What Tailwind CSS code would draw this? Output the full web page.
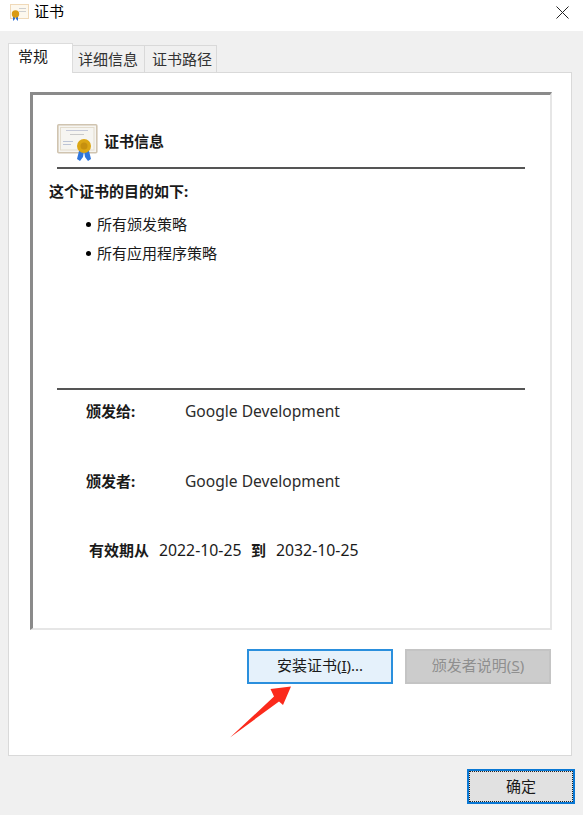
<!DOCTYPE html>
<html lang="zh-CN"><head><meta charset="utf-8">
<script src="https://cdn.jsdelivr.net/npm/@tailwindcss/browser@4"></script>
</head>
<body class="bg-white">
<div class="relative w-[584px] h-[815px] overflow-hidden bg-white text-[15px] text-[#1a1a1a] font-['Noto_Sans','Noto_Sans_CJK_SC',sans-serif]">
  <!-- title bar -->
  <div class="h-[31px] flex items-start">
    <svg class="ml-[10px] mt-[4px] w-[19px] h-[17px]" viewBox="0 0 19 17"><rect x="0.500" y="0.500" width="18" height="14" fill="#fdf8ee" stroke="#f0d9b8"/><rect x="9" y="4" width="7" height="1" fill="#cfcfcf"/><rect x="9" y="7" width="7" height="1" fill="#cfcfcf"/><path d="M3 12 L3 17 L5 15 L5 12Z M6 12 L6 15 L8 17 L8 12Z" fill="#2a6fd6"/><circle cx="5.500" cy="10" r="3.700" fill="#d99a12"/></svg>
    <span class="ml-[5px] mt-[1px] text-[15px] leading-[20px] text-black">证书</span>
    <svg class="ml-auto mr-[15px] mt-[6px] w-[13px] h-[13px]" viewBox="0 0 13 13"><path d="M0.500 0.500 L12.500 12.500 M12.500 0.500 L0.500 12.500" stroke="#222" stroke-width="1" fill="none"/></svg>
  </div>
  <!-- dialog body -->
  <div class="h-[784px] w-[583px] bg-[#f0f0f0] pt-[12px] pl-[8px]">
    <div class="flex items-end h-[30px] relative z-10 -mb-px">
      <div class="w-[65px] h-[30px] bg-white border border-b-0 border-[#dcdcdc] pl-[9px] text-[15px] leading-[24px]">常规</div>
      <div class="w-[72px] h-[28px] bg-[#f0f0f0] border border-[#d9d9d9] border-l-0 pl-[5px] text-[15px] leading-[26px] text-[#333]">详细信息</div>
      <div class="w-[72px] h-[28px] bg-[#f0f0f0] border border-[#d9d9d9] border-l-0 pl-[7px] text-[15px] leading-[26px] text-[#333]">证书路径</div>
    </div>
    <div class="w-[564px] h-[684px] bg-white border border-[#d9d9d9] pt-[19px] pl-[21px]">
      <!-- inner box -->
      <div class="w-[522px] h-[538px] border-t-[3px] border-l-[3px] border-r-2 border-b-2 border-t-[#8a8a8a] border-l-[#8a8a8a] border-r-[#e6e6e6] border-b-[#e6e6e6] flex flex-col">
        <div class="flex items-center h-[72px] pt-[22px] pl-[24px] shrink-0">
          <svg class="w-[41px] h-[37px]" viewBox="0 0 41 37"><rect x="0.800" y="0.800" width="39" height="28" rx="1" fill="#f6f5f1" stroke="#d0c4b0" stroke-width="1.600"/><rect x="3.500" y="3.500" width="33.500" height="22.500" fill="none" stroke="#e3dccd"/><rect x="9" y="6" width="22" height="1" fill="#c5c9d8"/><rect x="13" y="10" width="14" height="1" fill="#c9c9c9"/><rect x="6" y="17" width="10" height="1" fill="#bcc4d6"/><rect x="6" y="20" width="8" height="1" fill="#bcc4d6"/><path d="M22 27 L20 35 L23 37 L26 33 L27 27Z M27 27 L28 33 L31 37 L34 35 L32 27Z" fill="#2f76dc"/><circle cx="27" cy="22" r="7" fill="#dba614"/><circle cx="27" cy="22" r="3.500" fill="#c6900f"/></svg>
          <span class="ml-[6px] text-[15px] font-bold leading-[20px] mt-[-2px]">证书信息</span>
        </div>
        <div class="ml-[24px] w-[468px] h-[2px] bg-[#555] shrink-0"></div>
        <p class="ml-[16px] mt-[12px] text-[15px] font-bold leading-[20px]">这个证书的目的如下:</p>
        <ul class="ml-[53px] mt-[13px] flex flex-col gap-[9px] text-[15px] leading-[20px]">
          <li class="flex items-center"><span class="w-[5px] h-[5px] rounded-full bg-black mr-[6px]"></span>所有颁发策略</li>
          <li class="flex items-center"><span class="w-[5px] h-[5px] rounded-full bg-black mr-[6px]"></span>所有应用程序策略</li>
        </ul>
        <div class="ml-[24px] w-[468px] h-[2px] bg-[#555] mt-[125px] shrink-0"></div>
        <div class="flex ml-[53px] mt-[11px] h-[20px] leading-[20px] text-[15px]"><span class="font-bold w-[99px]">颁发给:</span><span class="text-[15.6px] text-[#2b2b2b]">Google Development</span></div>
        <div class="flex ml-[53px] mt-[50px] h-[20px] leading-[20px] text-[15px]"><span class="font-bold w-[99px]">颁发者:</span><span class="text-[15.6px] text-[#2b2b2b]">Google Development</span></div>
        <div class="flex ml-[56px] mt-[49px] h-[20px] leading-[20px] text-[15px]"><span class="font-bold w-[70px]">有效期从</span><span class="text-[15.8px] w-[92px]">2022-10-25</span><span class="font-bold w-[25px]">到</span><span class="text-[15.8px]">2032-10-25</span></div>
      </div>
      <!-- action buttons -->
      <div class="flex mt-[19px] ml-[217px] gap-[12px]">
        <button class="w-[146px] h-[35px] pb-[3px] bg-[#e5f1fb] border-2 border-[#2a8fdd] text-[15px] leading-[20px]">安装证书(<u>I</u>)...</button>
        <button class="w-[146px] h-[35px] pb-[3px] bg-[#cccccc] border-2 border-[#c4c4c4] text-[15px] leading-[20px] text-[#8f8f8f]">颁发者说明(<u>S</u>)</button>
      </div>
    </div>
    <!-- footer -->
    <div class="flex justify-end pr-[1px] mt-[13px] w-[568px]">
      <button class="w-[108px] h-[35px] pb-[1px] bg-[#e1e1e1] border-[2px] border-[#0a78d4] outline-dotted outline-1 -outline-offset-3 outline-[#222] text-[15px] leading-[20px]">确定</button>
    </div>
  </div>
  <!-- red annotation arrow -->
  <svg class="absolute left-[228px] top-[684px] w-[66px] h-[56px]" viewBox="0 0 66 56"><path d="M2 53.500 L46 12.500 L42.500 5 L63 2.500 L55 21 L51 17.500 Z" fill="#fb2a1c"/></svg>
</div>
</body></html>
